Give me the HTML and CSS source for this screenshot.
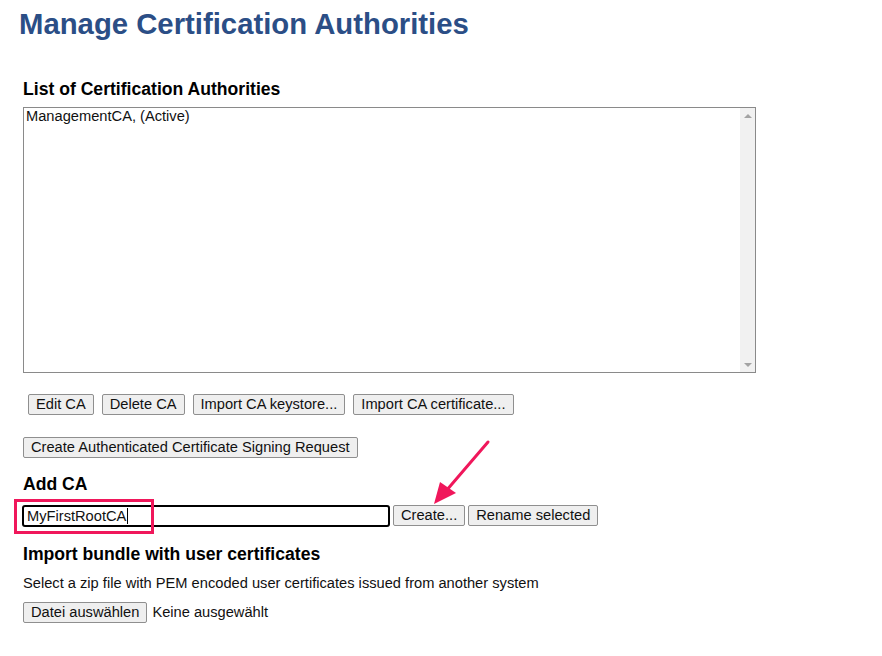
FILE: index.html
```html
<!DOCTYPE html>
<html>
<head>
<meta charset="utf-8">
<title>Manage Certification Authorities</title>
<link rel="stylesheet" href="styles.css">
</head>
<body>
<div class="page">
  <h1 class="title">Manage Certification Authorities</h1>

  <h3 class="section list-heading">List of Certification Authorities</h3>
  <div class="listbox">
    <div class="listbox-items">
      <div class="option">ManagementCA, (Active)</div>
    </div>
    <div class="scrollbar">
      <span class="arrow-up"></span>
      <span class="arrow-down"></span>
    </div>
  </div>

  <div class="button-row ca-actions">
    <button class="btn">Edit CA</button>
    <button class="btn">Delete CA</button>
    <button class="btn">Import CA keystore...</button>
    <button class="btn">Import CA certificate...</button>
  </div>

  <div class="button-row csr-row">
    <button class="btn">Create Authenticated Certificate Signing Request</button>
  </div>

  <h3 class="section add-heading">Add CA</h3>
  <div class="button-row add-row">
    <div class="textbox"><span>MyFirstRootCA</span><span class="caret"></span></div>
    <button class="btn">Create...</button>
    <button class="btn">Rename selected</button>
  </div>

  <h3 class="section import-heading">Import bundle with user certificates</h3>
  <p class="hint">Select a zip file with PEM encoded user certificates issued from another system</p>
  <div class="file-row">
    <button class="btn">Datei auswählen</button>
    <span class="file-name">Keine ausgewählt</span>
  </div>
</div>

<svg class="annotations" width="882" height="656" viewBox="0 0 882 656">
  <rect x="15.5" y="500.5" width="137" height="32" fill="none" stroke="#f0175b" stroke-width="3"/>
  <line x1="488" y1="442" x2="446" y2="491" stroke="#f0175b" stroke-width="3" stroke-linecap="round"/>
  <polygon points="434,504 440,482 456,493" fill="#f0175b"/>
</svg>
</body>
</html>
```

FILE: styles.css
```css
html, body {
  margin: 0;
  padding: 0;
  background: #ffffff;
}

body {
  font-family: "Liberation Sans", Arial, sans-serif;
  font-size: 11pt;
  color: #111;
  position: relative;
  width: 882px;
  height: 656px;
  overflow: hidden;
}

.page {
  padding: 7px 0 0 23px;
  display: flex;
  flex-direction: column;
  align-items: flex-start;
}

.title {
  margin: 0 0 0 -4px;
  font-size: 29.3px;
  line-height: 34px;
  font-weight: bold;
  color: #2b4e86;
}

.section {
  margin: 0;
  font-size: 17.6px;
  line-height: 20px;
  font-weight: bold;
  color: #000;
}

.list-heading { margin-top: 38px; }

.listbox {
  margin-top: 8px;
  width: 733px;
  height: 266px;
  box-sizing: border-box;
  border: 1px solid #8a8a8a;
  display: flex;
  background: #fff;
}

.listbox-items {
  flex: 1;
  padding: 0 2px;
}

.option {
  line-height: 16px;
  color: #111;
}

.scrollbar {
  width: 15px;
  background: #f1f1f1;
  display: flex;
  flex-direction: column;
  justify-content: space-between;
  align-items: center;
  padding: 6px 0 5px;
  box-sizing: border-box;
}

.arrow-up, .arrow-down {
  width: 0;
  height: 0;
  border-left: 4px solid transparent;
  border-right: 4px solid transparent;
}

.arrow-up { border-bottom: 4px solid #a3a3a3; }
.arrow-down { border-top: 4px solid #a3a3a3; }

.button-row {
  display: flex;
  align-items: flex-start;
}

.ca-actions {
  margin-top: 21px;
  padding-left: 5px;
  gap: 8px;
}

.csr-row { margin-top: 22px; }

.btn {
  font-family: "Liberation Sans", Arial, sans-serif;
  font-size: 11pt;
  line-height: 17px;
  height: 21px;
  padding: 1px 7px;
  margin: 0;
  box-sizing: border-box;
  background: #efefef;
  color: #111;
  border: 1px solid #8f8f8f;
  border-radius: 2px;
  white-space: nowrap;
}

.add-heading { margin-top: 16px; }

.add-row {
  margin-top: 11px;
  margin-left: -1px;
  gap: 3px;
}

.textbox {
  width: 368px;
  height: 22px;
  box-sizing: border-box;
  border: 2px solid #000;
  border-radius: 3px;
  padding: 0 3px;
  display: flex;
  align-items: center;
  line-height: 17px;
  color: #111;
}

.caret {
  display: inline-block;
  width: 1px;
  height: 16px;
  background: #000;
  margin-left: 1px;
}

.import-heading { margin-top: 17px; }

.hint {
  margin: 11px 0 0;
  line-height: 17px;
}

.file-row {
  margin-top: 10px;
  display: flex;
  align-items: center;
  gap: 5px;
}

.file-name {
  line-height: 17px;
}

.annotations {
  position: absolute;
  left: 0;
  top: 0;
  pointer-events: none;
}
```
